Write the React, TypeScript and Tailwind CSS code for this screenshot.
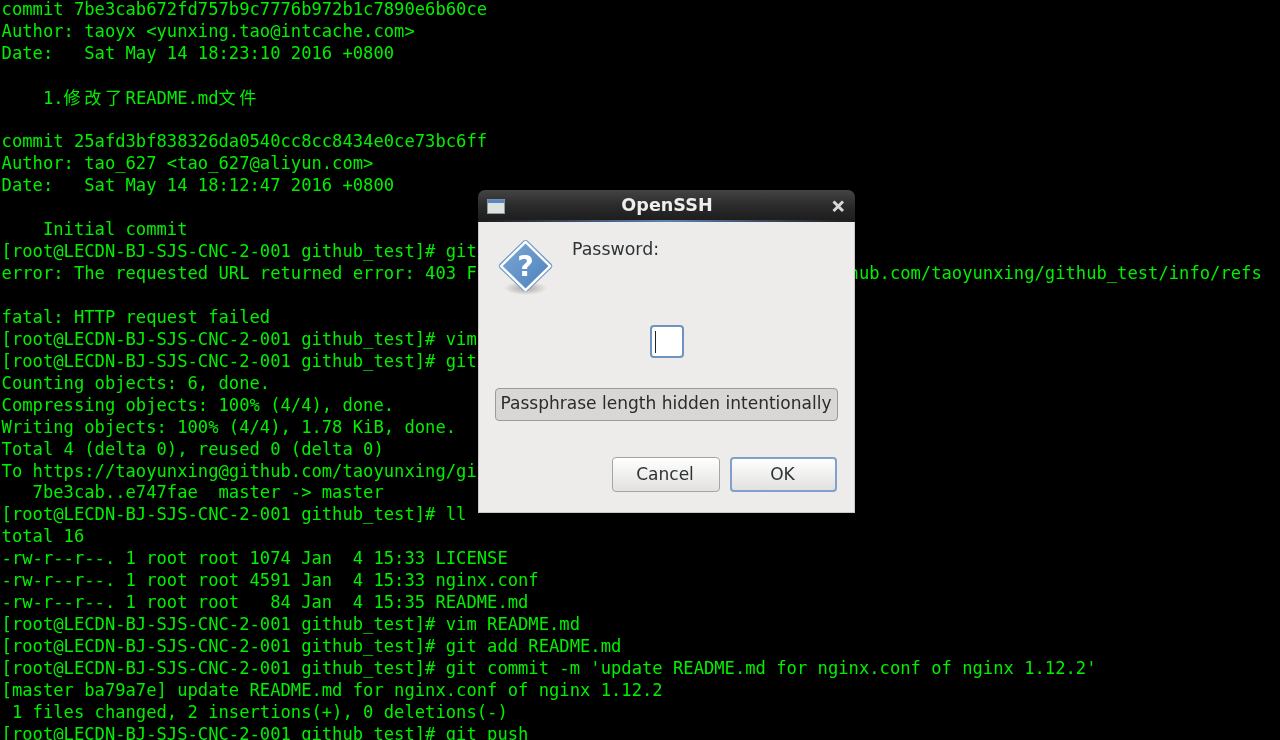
const prompt = "[root@LECDN-BJ-SJS-CNC-2-001 github_test]# "

const lines_before = [
  "commit 7be3cab672fd757b9c7776b972b1c7890e6b60ce",
  "Author: taoyx <yunxing.tao@intcache.com>",
  "Date:   Sat May 14 18:23:10 2016 +0800",
  "",
]

const lines_after = [
  "",
  "commit 25afd3bf838326da0540cc8cc8434e0ce73bc6ff",
  "Author: tao_627 <tao_627@aliyun.com>",
  "Date:   Sat May 14 18:12:47 2016 +0800",
  "",
  "    Initial commit",
  prompt + "git push",
  "error: The requested URL returned error: 403 Forbidden while accessing https://github.com/taoyunxing/github_test/info/refs",
  "",
  "fatal: HTTP request failed",
  prompt + "vim .git/config",
  prompt + "git push",
  "Counting objects: 6, done.",
  "Compressing objects: 100% (4/4), done.",
  "Writing objects: 100% (4/4), 1.78 KiB, done.",
  "Total 4 (delta 0), reused 0 (delta 0)",
  "To https://taoyunxing@github.com/taoyunxing/github_test.git",
  "   7be3cab..e747fae  master -> master",
  prompt + "ll",
  "total 16",
  "-rw-r--r--. 1 root root 1074 Jan  4 15:33 LICENSE",
  "-rw-r--r--. 1 root root 4591 Jan  4 15:33 nginx.conf",
  "-rw-r--r--. 1 root root   84 Jan  4 15:35 README.md",
  prompt + "vim README.md",
  prompt + "git add README.md",
  prompt + "git commit -m 'update README.md for nginx.conf of nginx 1.12.2'",
  "[master ba79a7e] update README.md for nginx.conf of nginx 1.12.2",
  " 1 files changed, 2 insertions(+), 0 deletions(-)",
  prompt + "git push",
]

function Line({ text }: { text: string }) {
  return <div className="h-[21.97px]">{text}</div>
}

function QuestionIcon() {
  return (
    <svg width="59" height="61" viewBox="0 0 60 62">
      <defs>
        <linearGradient id="diamond" x1="0" y1="0" x2="1" y2="1">
          <stop offset="0" stopColor="#7fa9d6" />
          <stop offset="1" stopColor="#4a7fbc" />
        </linearGradient>
        <radialGradient id="shadow">
          <stop offset="0" stopColor="#000" stopOpacity="0.3" />
          <stop offset="1" stopColor="#000" stopOpacity="0" />
        </radialGradient>
      </defs>
      <ellipse cx="28" cy="50" rx="22" ry="7" fill="url(#shadow)" />
      <path d="M28 1 Q29.500 1 31 2.500 L54 25 Q56.500 27.500 54 30 L31 52 Q28 54.500 25 52 L2 30 Q-0.500 27.500 2 25 L25 2.500 Q26.500 1 28 1 Z" fill="#6f98c8" />
      <path d="M28 3 L53 27.500 L28 52 L3 27.500 Z" fill="url(#diamond)" stroke="#fff" strokeWidth="2.400" strokeLinejoin="round" />
      <text x="28" y="38" textAnchor="middle" fontFamily="'DejaVu Sans', sans-serif" fontWeight="700" fontSize="29" fill="#fff">?</text>
    </svg>
  )
}

function WindowIcon() {
  return (
    <svg width="18" height="15" viewBox="0 0 18 15">
      <rect x="0.500" y="0.500" width="17" height="14" fill="#dfe3e0" stroke="#8d99a6" />
      <rect x="0.500" y="0.500" width="17" height="3.500" fill="#5c86c0" />
    </svg>
  )
}

function Dialog() {
  return (
    <div className="absolute left-[478px] top-[190px] w-[377px] h-[323px] flex flex-col font-['DejaVu_Sans',sans-serif] text-[17.05px] text-[#2e3436]">
      <div className="relative h-[32px] shrink-0 rounded-t-[7px] bg-gradient-to-b from-[#444444] via-[#2a2a2a] to-[#1c1c1c] flex items-center px-[9px]">
        <WindowIcon />
        <div className="flex-1 pr-[2px] text-center font-bold text-[#eeeeec] text-[17.6px] -mt-[2px]">OpenSSH</div>
        <svg width="15" height="15" viewBox="0 0 15 15" className="mt-[1px]">
          <path d="M2.500 2.500 L12 12 M12 2.500 L2.500 12" stroke="#d8d8d8" strokeWidth="3" />
        </svg>
        <div className="absolute left-0 right-0 bottom-0 h-[2px] bg-gradient-to-r from-[#1c1c1c] via-[#5f85b5] to-[#1c1c1c]" />
      </div>
      <div className="flex-1 flex flex-col bg-[#edeceb] border-x border-[#c8c8c8] border-b">
        <div className="flex h-[82px] pl-[19px] pt-[17px]">
          <QuestionIcon />
          <div className="ml-[15px] -mt-[1px] leading-[22px] text-[17.4px]">Password:</div>
        </div>
        <div className="flex justify-center mt-[21px]">
          <div className="w-[34px] h-[33px] rounded-[4px] bg-white border-2 border-[#6f93c0] flex items-center pl-[3px]">
            <div className="w-px h-[22px] bg-[#222]" />
          </div>
        </div>
        <div className="mx-[16px] mt-[30px] h-[33px] pb-[2px] pr-[1px] rounded-[4px] border border-[#9a9a98] bg-[#d8d7d5] flex items-center justify-center whitespace-nowrap text-[#2a2c2c]">
          Passphrase length hidden intentionally
        </div>
        <div className="flex justify-end gap-[10px] mt-[36px] pr-[17px]">
          <div className="w-[108px] h-[35px] pr-[2px] rounded-[4px] border border-[#a5a5a3] bg-gradient-to-b from-white to-[#e2e1df] flex items-center justify-center">Cancel</div>
          <div className="w-[107px] h-[35px] pr-[2px] rounded-[4px] border-2 border-[#7ea2cc] bg-gradient-to-b from-white to-[#e2e1df] flex items-center justify-center">OK</div>
        </div>
      </div>
    </div>
  )
}

export default function App() {
  return (
    <div className="relative w-[1280px] h-[740px] overflow-hidden bg-black blur-[0.5px]">
      <div className="-mt-[1.85px] pl-[1.6px] whitespace-pre text-[17.16px] leading-[22px] text-[#00f000] font-['DejaVu_Sans_Mono','Noto_Sans_CJK_SC',monospace]">
        {lines_before.map((text, i) => (
          <Line key={i} text={text} />
        ))}
        <div className="h-[21.97px]">
          {"    1."}
          <span className="font-['Noto_Sans_CJK_SC',sans-serif] tracking-[3.5px]">修改了</span>
          README.md
          <span className="font-['Noto_Sans_CJK_SC',sans-serif] tracking-[3.5px]">文件</span>
        </div>
        {lines_after.map((text, i) => (
          <Line key={i} text={text} />
        ))}
      </div>
      <Dialog />
    </div>
  )
}
